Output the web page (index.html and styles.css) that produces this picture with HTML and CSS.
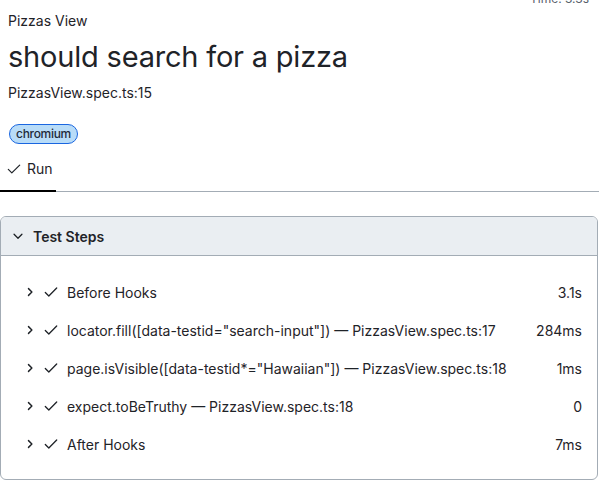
FILE: index.html
```html
<!DOCTYPE html>
<html>
<head>
<meta charset="utf-8">
<link rel="stylesheet" href="styles.css">
</head>
<body>
<div class="time-row"><span class="time">Time: 3.3s</span></div>
<div class="head">
  <div class="suite">Pizzas View</div>
  <div class="title">should search for a pizza</div>
  <div class="loc">PizzasView.spec.ts:15</div>
  <div class="labels"><span class="badge">chromium</span></div>
</div>
<div class="tabs">
  <div class="tab">
    <svg class="tick" width="14" height="14" viewBox="0 0 16 16"><path d="M1.5 8.5l4 4L14.5 3.5" fill="none" stroke="#1f2328" stroke-width="1.4" stroke-linecap="round" stroke-linejoin="round"/></svg>
    <span>Run</span>
  </div>
</div>
<div class="box">
  <div class="box-head">
    <svg class="chev" width="14" height="14" viewBox="0 0 16 16"><path d="M3.5 6l4.5 4.5L12.5 6" fill="none" stroke="#1f2328" stroke-width="1.5" stroke-linecap="round" stroke-linejoin="round"/></svg>
    <span>Test Steps</span>
  </div>
  <div class="steps">
    <div class="step">
      <svg class="chev" width="12" height="12" viewBox="0 0 16 16"><path d="M6 3.5l4.5 4.5L6 12.5" fill="none" stroke="#1f2328" stroke-width="1.9" stroke-linecap="round" stroke-linejoin="round"/></svg>
      <svg class="tick" width="14" height="14" viewBox="0 0 16 16"><path d="M1.5 8.5l4 4L14.5 3.5" fill="none" stroke="#1f2328" stroke-width="1.5" stroke-linecap="round" stroke-linejoin="round"/></svg>
      <span class="name">Before Hooks</span>
      <span class="dur">3.1s</span>
    </div>
    <div class="step">
      <svg class="chev" width="12" height="12" viewBox="0 0 16 16"><path d="M6 3.5l4.5 4.5L6 12.5" fill="none" stroke="#1f2328" stroke-width="1.9" stroke-linecap="round" stroke-linejoin="round"/></svg>
      <svg class="tick" width="14" height="14" viewBox="0 0 16 16"><path d="M1.5 8.5l4 4L14.5 3.5" fill="none" stroke="#1f2328" stroke-width="1.5" stroke-linecap="round" stroke-linejoin="round"/></svg>
      <span class="name">locator.fill([data-testid="search-input"]) — PizzasView.spec.ts:17</span>
      <span class="dur">284ms</span>
    </div>
    <div class="step">
      <svg class="chev" width="12" height="12" viewBox="0 0 16 16"><path d="M6 3.5l4.5 4.5L6 12.5" fill="none" stroke="#1f2328" stroke-width="1.9" stroke-linecap="round" stroke-linejoin="round"/></svg>
      <svg class="tick" width="14" height="14" viewBox="0 0 16 16"><path d="M1.5 8.5l4 4L14.5 3.5" fill="none" stroke="#1f2328" stroke-width="1.5" stroke-linecap="round" stroke-linejoin="round"/></svg>
      <span class="name">page.isVisible([data-testid*="Hawaiian"]) — PizzasView.spec.ts:18</span>
      <span class="dur">1ms</span>
    </div>
    <div class="step">
      <svg class="chev" width="12" height="12" viewBox="0 0 16 16"><path d="M6 3.5l4.5 4.5L6 12.5" fill="none" stroke="#1f2328" stroke-width="1.9" stroke-linecap="round" stroke-linejoin="round"/></svg>
      <svg class="tick" width="14" height="14" viewBox="0 0 16 16"><path d="M1.5 8.5l4 4L14.5 3.5" fill="none" stroke="#1f2328" stroke-width="1.5" stroke-linecap="round" stroke-linejoin="round"/></svg>
      <span class="name">expect.toBeTruthy — PizzasView.spec.ts:18</span>
      <span class="dur">0</span>
    </div>
    <div class="step">
      <svg class="chev" width="12" height="12" viewBox="0 0 16 16"><path d="M6 3.5l4.5 4.5L6 12.5" fill="none" stroke="#1f2328" stroke-width="1.9" stroke-linecap="round" stroke-linejoin="round"/></svg>
      <svg class="tick" width="14" height="14" viewBox="0 0 16 16"><path d="M1.5 8.5l4 4L14.5 3.5" fill="none" stroke="#1f2328" stroke-width="1.5" stroke-linecap="round" stroke-linejoin="round"/></svg>
      <span class="name">After Hooks</span>
      <span class="dur">7ms</span>
    </div>
  </div>
</div>
</body>
</html>
```
FILE: styles.css
```css
html, body {
  margin: 0;
  padding: 0;
  background: #ffffff;
}
body {
  font-family: Inter, "Noto Sans", sans-serif;
  font-size: 14px;
  color: #1f2328;
  width: 599px;
}
svg {
  flex-shrink: 0;
  display: block;
}
.time-row {
  height: 3px;
  overflow: hidden;
  display: flex;
  justify-content: flex-end;
  align-items: flex-end;
  padding-right: 10px;
}
.time {
  font-size: 12px;
  line-height: 14px;
  color: #57606a;
  white-space: nowrap;
  margin-bottom: -3px;
}
.head {
  padding: 8px 8px 0 8px;
}
.suite {
  font-size: 14px;
  line-height: 20px;
}
.title {
  font-size: 29px;
  line-height: 40px;
  margin-top: 6px;
  letter-spacing: -0.2px;
}
.loc {
  font-size: 14px;
  line-height: 20px;
  margin-top: 6px;
}
.labels {
  margin-top: 21px;
  display: flex;
}
.badge {
  display: inline-block;
  background: #b8dcf8;
  border: 1px solid #1a66e0;
  border-radius: 12px;
  font-size: 12px;
  font-weight: 500;
  letter-spacing: -0.3px;
  line-height: 16px;
  padding: 1px 6px;
  color: #1f2a3a;
  margin-left: 1px;
}
.tabs {
  margin-top: 10px;
  border-bottom: 1px solid #a3acb5;
  display: flex;
}
.tab {
  display: flex;
  align-items: center;
  gap: 6px;
  padding: 6px 3px 13px 7px;
  border-bottom: 2px solid #000;
  margin-bottom: -1px;
}
.box {
  margin-top: 24px;
  border: 1px solid #a3acb5;
  border-radius: 6px;
  width: 596px;
  overflow: hidden;
}
.box-head {
  background: #eaeef2;
  border-bottom: 1px solid #a3acb5;
  height: 38px;
  display: flex;
  align-items: center;
  padding-left: 10px;
  gap: 8px;
  font-weight: 600;
  font-size: 14px;
}
.steps {
  padding: 17px 0 16px 0;
}
.step {
  display: flex;
  align-items: center;
  height: 38px;
  padding-left: 23px;
  padding-right: 15px;
}
.step .chev {
  margin-right: 8px;
}
.step .tick {
  margin-right: 9px;
}
.step .name {
  flex: 1;
  white-space: nowrap;
}
.step .dur {
  white-space: nowrap;
}
```
